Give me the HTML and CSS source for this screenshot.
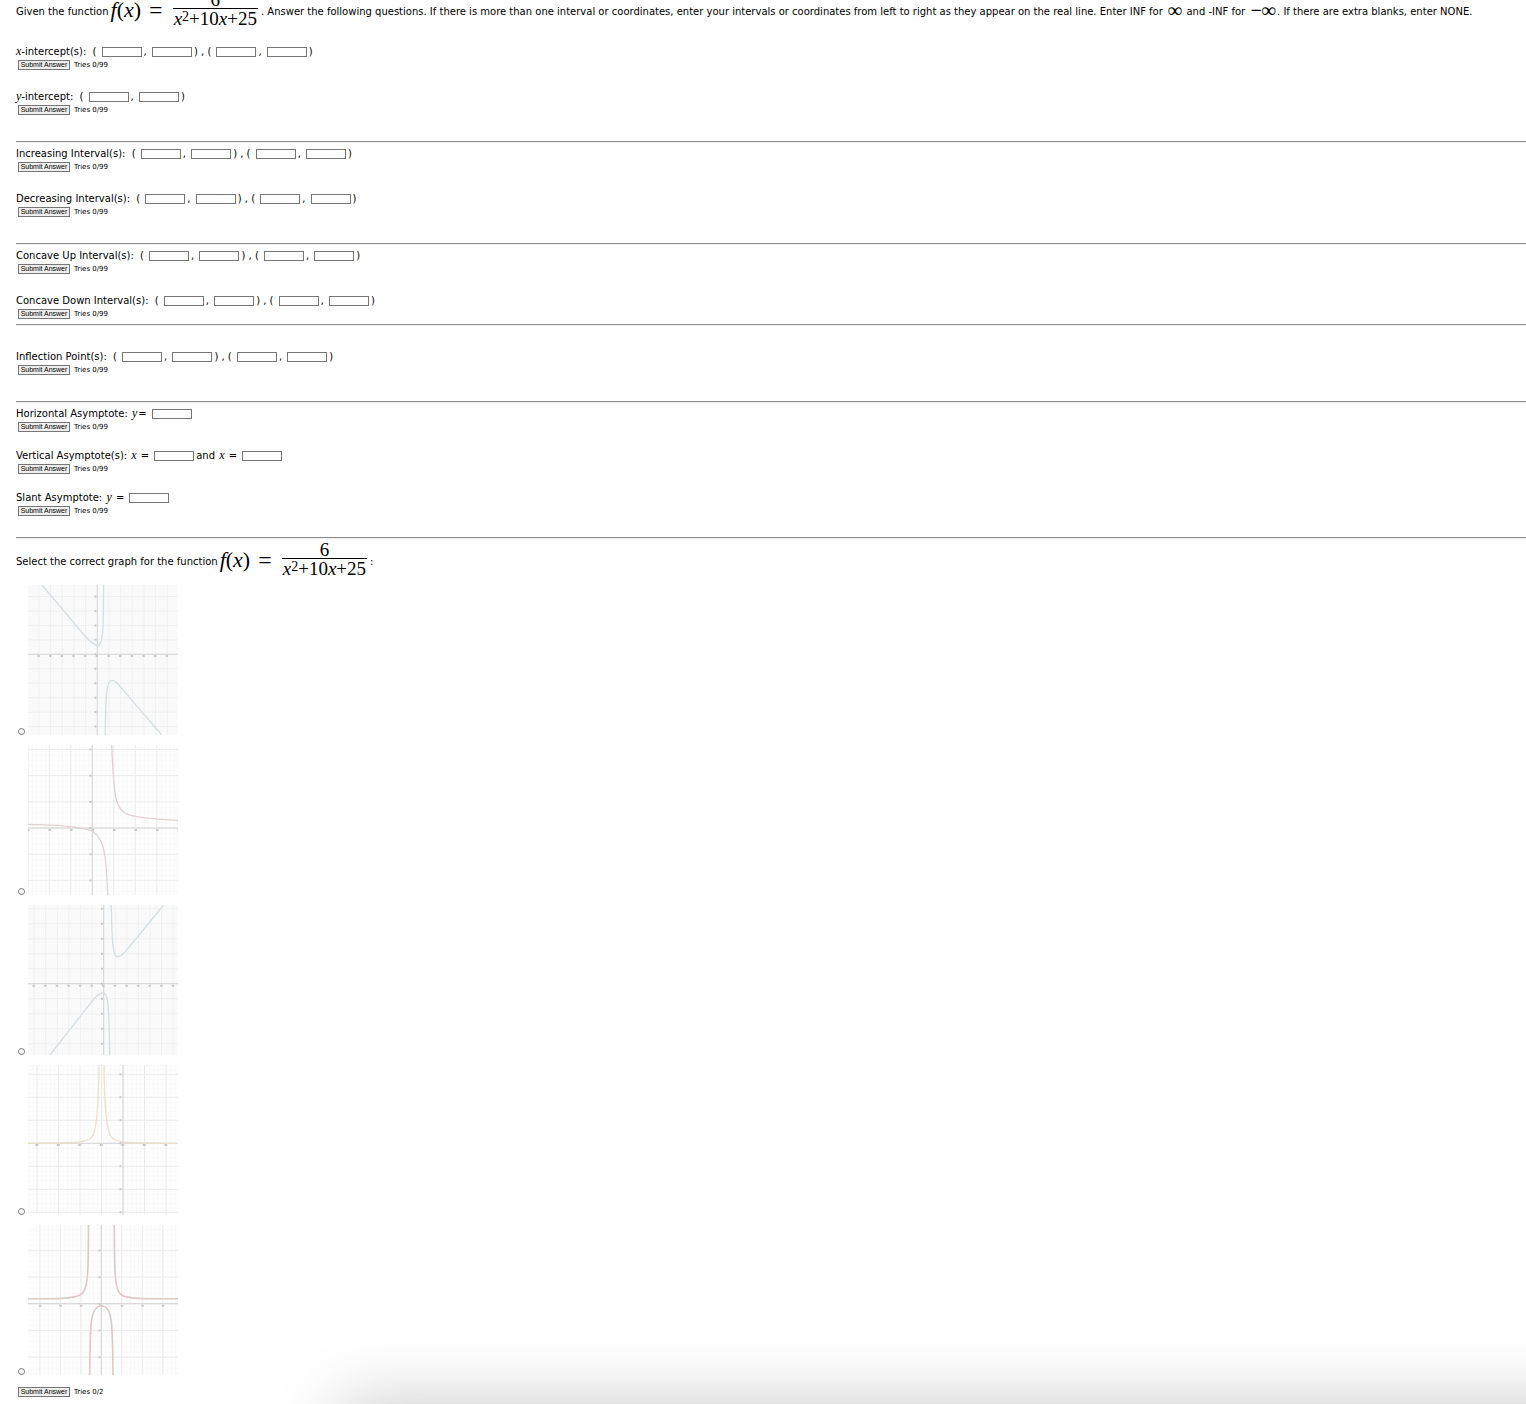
FILE: index.html
```html
<!DOCTYPE html>
<html lang="en">
<head>
  <meta charset="UTF-8">
  <meta name="viewport" content="width=device-width, initial-scale=1.0">
  <title>Rational Function</title>
  <link rel="stylesheet" href="styles.css">
</head>
<body>
  <form class="problem" onsubmit="return false">
    <p class="intro">Given the function<span class="formula"><span class="lhs"><i>f</i>(<i>x</i>)</span><span class="eq">=</span><span class="frac"><span class="num">6</span><span class="den"><i>x</i><sup>2</sup>+10<i>x</i>+25</span></span></span>. Answer the following questions. If there is more than one interval or coordinates, enter your intervals or coordinates from left to right as they appear on the real line. Enter INF for <span class="inf">∞</span> and -INF for <span class="inf">−∞</span>. If there are extra blanks, enter NONE.</p>

    <div class="question">
      <div class="fields"><label for="xint1"><i class="var">x</i>-intercept(s):</label> ( <input type="text" id="xint1">, <input type="text" aria-label="y">) , ( <input type="text" aria-label="x">, <input type="text" aria-label="y">)</div>
      <div class="submit"><button type="submit">Submit Answer</button><span>Tries 0/99</span></div>
    </div>
    <div class="question">
      <div class="fields"><label for="yint1"><i class="var">y</i>-intercept:</label> ( <input type="text" id="yint1">, <input type="text" aria-label="y">)</div>
      <div class="submit"><button type="submit">Submit Answer</button><span>Tries 0/99</span></div>
    </div>
    <hr>

    <div class="question">
      <div class="fields"><label for="inc1">Increasing Interval(s):</label> ( <input type="text" id="inc1">, <input type="text" aria-label="to">) , ( <input type="text" aria-label="from">, <input type="text" aria-label="to">)</div>
      <div class="submit"><button type="submit">Submit Answer</button><span>Tries 0/99</span></div>
    </div>
    <div class="question">
      <div class="fields"><label for="dec1">Decreasing Interval(s):</label> ( <input type="text" id="dec1">, <input type="text" aria-label="to">) , ( <input type="text" aria-label="from">, <input type="text" aria-label="to">)</div>
      <div class="submit"><button type="submit">Submit Answer</button><span>Tries 0/99</span></div>
    </div>
    <hr>

    <div class="question">
      <div class="fields"><label for="up1">Concave Up Interval(s):</label> ( <input type="text" id="up1">, <input type="text" aria-label="to">) , ( <input type="text" aria-label="from">, <input type="text" aria-label="to">)</div>
      <div class="submit"><button type="submit">Submit Answer</button><span>Tries 0/99</span></div>
    </div>
    <div class="question">
      <div class="fields"><label for="down1">Concave Down Interval(s):</label> ( <input type="text" id="down1">, <input type="text" aria-label="to">) , ( <input type="text" aria-label="from">, <input type="text" aria-label="to">)</div>
      <div class="submit"><button type="submit">Submit Answer</button><span>Tries 0/99</span></div>
    </div>
    <hr class="raised">

    <div class="question">
      <div class="fields"><label for="infl1">Inflection Point(s):</label> ( <input type="text" id="infl1">, <input type="text" aria-label="y">) , ( <input type="text" aria-label="x">, <input type="text" aria-label="y">)</div>
      <div class="submit"><button type="submit">Submit Answer</button><span>Tries 0/99</span></div>
    </div>
    <hr>

    <div class="asymptotes">
      <div class="question">
        <div class="fields"><label for="ha">Horizontal Asymptote: <i class="var">y</i>=</label><input type="text" id="ha"></div>
        <div class="submit"><button type="submit">Submit Answer</button><span>Tries 0/99</span></div>
      </div>
      <div class="question">
        <div class="fields"><label for="va1">Vertical Asymptote(s): <i class="var">x</i> =</label><input type="text" id="va1"><label for="va2">and <i class="var">x</i> =</label><input type="text" id="va2"></div>
        <div class="submit"><button type="submit">Submit Answer</button><span>Tries 0/99</span></div>
      </div>
      <div class="question">
        <div class="fields"><label for="sa">Slant Asymptote: <i class="var">y</i> =</label><input type="text" id="sa"></div>
        <div class="submit"><button type="submit">Submit Answer</button><span>Tries 0/99</span></div>
      </div>
    </div>
    <hr class="last">

    <p class="select">Select the correct graph for the function<span class="formula"><span class="lhs"><i>f</i>(<i>x</i>)</span><span class="eq">=</span><span class="frac"><span class="num">6</span><span class="den"><i>x</i><sup>2</sup>+10<i>x</i>+25</span></span></span>:</p>

    <div class="choices">
      <label class="choice">
        <input type="radio" name="graph" value="1" aria-label="Graph 1">
        <svg class="graph shaded" viewBox="0 0 150 150">
          <defs>
            <pattern id="minor1" x="69.3" y="69.3" width="2.33" height="2.89" patternUnits="userSpaceOnUse"><path class="minor" d="M0 0H2.33M0 0V2.89"/></pattern>
            <pattern id="major1" x="68.8" y="68.8" width="11.67" height="14.45" patternUnits="userSpaceOnUse"><path class="major" d="M0 .5H11.67M.5 0V14.45"/></pattern>
          </defs>
          <rect width="150" height="150" fill="url(#minor1)"/>
          <rect width="150" height="150" fill="url(#major1)"/>
          <path class="axis" d="M0 69.3H150M69.3 0V150"/>
          <path class="ticks" d="M9.3 71H142" stroke-dasharray="2.5 9.17"/>
          <path class="ticks" d="M67.5 10.5V147" stroke-dasharray="2 12.45"/>
          <path class="curve blue" d="M14 0L57 51Q66 61 70 60.5C76.5 60 75 30 75.7 0M77.3 150C77.6 115 78 95.3 83.7 95.3C87 95.3 89.5 98 92 101.3L133.7 150"/>
        </svg>
      </label>
      <label class="choice">
        <input type="radio" name="graph" value="2" aria-label="Graph 2">
        <svg class="graph" viewBox="0 0 150 150">
          <defs>
            <pattern id="minor2" x="64.3" y="83" width="4.3" height="5.24" patternUnits="userSpaceOnUse"><path class="minor" d="M0 0H4.3M0 0V5.24"/></pattern>
            <pattern id="major2" x="63.8" y="82.5" width="21.5" height="26.2" patternUnits="userSpaceOnUse"><path class="major" d="M0 .5H21.5M.5 0V26.2"/></pattern>
          </defs>
          <rect width="150" height="150" fill="url(#minor2)"/>
          <rect width="150" height="150" fill="url(#major2)"/>
          <path class="axis" d="M0 83H150M64.3 0V150"/>
          <path class="ticks" d="M-1 85H150" stroke-dasharray="2.5 19"/>
          <path class="ticks" d="M62.5 3.5V150" stroke-dasharray="2 24.2"/>
          <path class="curve red" d="M83.7 0C84.5 20 86 42 87.7 52C91 67 98 70 107.3 71.3C120 73.5 135 74.5 150 75.3M0 79.3C18 80 30 80 42.7 81.7C53 83 59 83.5 64.3 86.3C69 89 71.5 93 73.7 98C77.5 108 78.5 122 79.7 150"/>
        </svg>
      </label>
      <label class="choice">
        <input type="radio" name="graph" value="3" aria-label="Graph 3">
        <svg class="graph shaded" viewBox="0 0 150 150">
          <defs>
            <pattern id="minor3" x="75.7" y="78.7" width="2.32" height="3" patternUnits="userSpaceOnUse"><path class="minor" d="M0 0H2.32M0 0V3"/></pattern>
            <pattern id="major3" x="75.2" y="78.2" width="11.6" height="15" patternUnits="userSpaceOnUse"><path class="major" d="M0 .5H11.6M.5 0V15"/></pattern>
          </defs>
          <rect width="150" height="150" fill="url(#minor3)"/>
          <rect width="150" height="150" fill="url(#major3)"/>
          <path class="axis" d="M0 78.7H150M75.7 0V150"/>
          <path class="ticks" d="M4.5 80.7H148" stroke-dasharray="2.5 9.1"/>
          <path class="ticks" d="M74 2.7V142" stroke-dasharray="2 13"/>
          <path class="curve blue" d="M83.3 0C83.8 25 84 51.7 89.3 51.7C92 51.7 94.5 49.5 97 47L135.7 0M22 150L52 111.7L65 95Q71 88 75.3 88C79 88 80.3 95 81.2 122.7L81.7 150"/>
        </svg>
      </label>
      <label class="choice">
        <input type="radio" name="graph" value="4" aria-label="Graph 4">
        <svg class="graph" viewBox="0 0 150 150">
          <defs>
            <pattern id="minor4" x="95" y="78.3" width="4.3" height="4.6" patternUnits="userSpaceOnUse"><path class="minor" d="M0 0H4.3M0 0V4.6"/></pattern>
            <pattern id="major4" x="94.5" y="77.8" width="21.5" height="23" patternUnits="userSpaceOnUse"><path class="major" d="M0 .5H21.5M.5 0V23"/></pattern>
          </defs>
          <rect width="150" height="150" fill="url(#minor4)"/>
          <rect width="150" height="150" fill="url(#major4)"/>
          <path class="axis" d="M0 78.3H150M95 0V150"/>
          <path class="ticks" d="M7.3 80H142" stroke-dasharray="3 18.5"/>
          <path class="ticks" d="M92.5 8.3V150" stroke-dasharray="2 21"/>
          <path class="curve orange" d="M0 78.3C20 78 38 78.3 51.7 77C59 76 63.5 74.5 65.3 70C68.5 62 70.5 45 71 0M76 0C76.3 45 78.5 62 82 70C84 74.5 88 76 95 77C109 78.3 130 78 150 78.3"/>
        </svg>
      </label>
      <label class="choice">
        <input type="radio" name="graph" value="5" aria-label="Graph 5">
        <svg class="graph" viewBox="0 0 150 150">
          <defs>
            <pattern id="minor5" x="73.3" y="78.7" width="4.1" height="5.34" patternUnits="userSpaceOnUse"><path class="minor" d="M0 0H4.1M0 0V5.34"/></pattern>
            <pattern id="major5" x="72.8" y="78.2" width="20.5" height="26.7" patternUnits="userSpaceOnUse"><path class="major" d="M0 .5H20.5M.5 0V26.7"/></pattern>
          </defs>
          <rect width="150" height="150" fill="url(#minor5)"/>
          <rect width="150" height="150" fill="url(#major5)"/>
          <path class="axis" d="M0 78.7H150M73.3 0V150"/>
          <path class="ticks" d="M10.8 80.7H142" stroke-dasharray="2.5 18"/>
          <path class="ticks" d="M71.5 24.5V142" stroke-dasharray="2 24.7"/>
          <path class="curve brown" d="M0 73.7C20 73.7 43 74.5 52 70C60.5 66 60.3 50 60.5 0M86.3 0C86.5 50 86.5 66 93.7 70C100 74.5 125 73.7 150 73.7M61.7 150C62 97 62.5 81 73.3 81C84.5 81 84.5 97 85 150"/>
        </svg>
      </label>
    </div>
    <div class="submit"><button type="submit">Submit Answer</button><span>Tries 0/2</span></div>
  </form>
  <div class="window-shadow"></div>
</body>
</html>
```
FILE: styles.css
```css
body {
  margin: 0;
  background-color: #fff;
  color: #000;
  font-family: Verdana, "DejaVu Sans", sans-serif;
  font-size: 10px;
  line-height: 14px;
}

.problem {
  padding: 0 0 8px 16px;
}

p {
  margin: 0;
}

.intro {
  margin-top: -8px;
  margin-bottom: 13px;
}

/* math */
.formula {
  display: inline-flex;
  align-items: center;
  vertical-align: middle;
  margin: 0 3px 0 2px;
  padding-bottom: 5px;
  font-family: "Liberation Serif", serif;
  font-size: 19px;
  line-height: 16px;
}

.lhs {
  font-size: 22px;
}

.eq {
  font-size: 24px;
  margin: 0 10px 0 8px;
}

.frac {
  display: flex;
  flex-direction: column;
  text-align: center;
}

.num {
  border-bottom: 1px solid #000;
}

.den {
  padding: 2px 1px 0;
}

.den sup {
  font-size: 14px;
  line-height: 0;
  vertical-align: 4px;
}

.inf {
  font-family: "Liberation Serif", serif;
  font-size: 20px;
  font-weight: bold;
  line-height: 0;
  vertical-align: -2px;
  margin: 0 1px 0 2px;
}

.var {
  font-family: "Liberation Serif", serif;
  font-size: 12px;
  line-height: 0;
}

/* questions */
.question + .question {
  margin-top: 20px;
}

.asymptotes .question + .question {
  margin-top: 17px;
}

.asymptotes .var {
  margin: 0 1px;
}

.fields {
  height: 14px;
  white-space: nowrap;
}

.fields label {
  margin-right: 3px;
}

.fields input {
  box-sizing: border-box;
  width: 40px;
  height: 10px;
  margin: 0 2px;
  padding: 0 1px;
  border: 1px solid #767676;
  font-size: 7px;
  vertical-align: middle;
}

.submit {
  display: flex;
  align-items: center;
  height: 10px;
  margin-left: 2px;
  font-size: 7px;
  line-height: 10px;
}

.fields + .submit {
  margin-top: 1px;
}

.submit button {
  box-sizing: border-box;
  width: 52px;
  height: 10px;
  margin-right: 4px;
  padding: 0;
  border: 1px solid #767676;
  background-color: #efefef;
  color: #000;
  font-family: "Liberation Sans", Arial, sans-serif;
  font-size: 7px;
  line-height: 8px;
  white-space: nowrap;
}

hr {
  margin: 26px 0 4px;
  border: none;
  border-top: 1px solid #8e8e8e;
  border-bottom: 1px solid #eee;
}

hr.raised {
  margin: 5px 0 24px;
}

hr.last {
  margin: 21px 0 3px;
}

/* graphs */
.choices {
  margin-top: 3px;
  margin-bottom: 12px;
}

.choice {
  display: flex;
  align-items: flex-end;
  margin-bottom: 10px;
}

.choice input {
  width: 7px;
  height: 7px;
  margin: 0 3px 0 2px;
}

.graph {
  width: 150px;
  height: 150px;
  background-color: #fefefe;
}

.graph path {
  fill: none;
}

.shaded {
  background-color: #fbfbfb;
}

.graph .minor {
  stroke: #f5f5f5;
}

.shaded .minor {
  stroke: #f8f8f8;
}

.graph .major {
  stroke: #ebebeb;
}

.shaded .major {
  stroke: #f0f0f0;
}

.graph .axis {
  stroke: #d6d6d6;
}

.graph .ticks {
  stroke: #c8c8c8;
  stroke-width: 2;
}

.graph .curve {
  stroke-width: 1.3;
}

.graph .blue {
  stroke: #d3dfe4;
}

.graph .red {
  stroke: #e4d2d2;
}

.graph .orange {
  stroke: #f0dfc8;
}

.graph .brown {
  stroke: #dfc8c5;
  stroke-width: 1.6;
}

.window-shadow {
  position: fixed;
  left: 340px;
  right: -200px;
  bottom: -100px;
  height: 100px;
  box-shadow: 0 0 70px rgba(0, 0, 0, 0.22);
  pointer-events: none;
}
```
